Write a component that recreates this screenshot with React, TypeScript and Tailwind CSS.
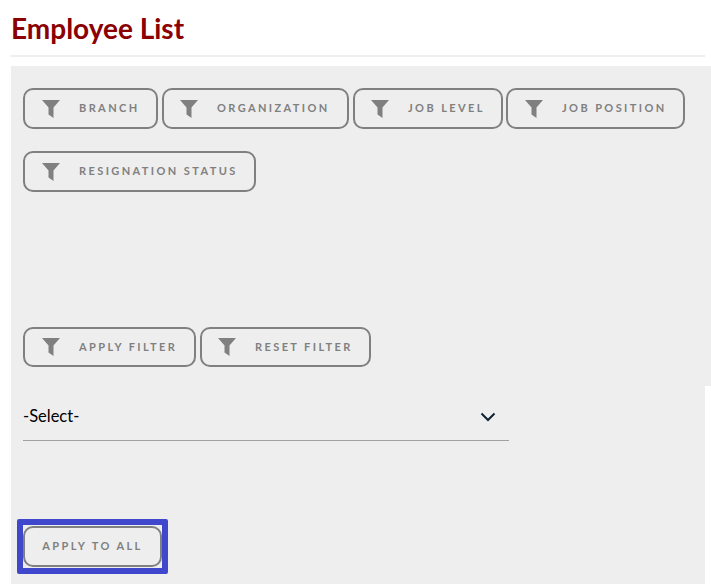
const F = '[font-family:Lato,sans-serif]';

function Funnel() {
  return (
    <svg width="18" height="18" viewBox="0 0 18 18" className="shrink-0 block">
      <path d="M0 0H18L11.5 7.5V18L6.5 14.5V7.5Z" fill="#808080" />
    </svg>
  );
}

function FilterBtn({ label, w, h = 'h-[41px]', pl = 'pl-[17px]' }: { label: string; w: string; h?: string; pl?: string }) {
  return (
    <button className={`${w} ${h} ${pl} flex items-center border-2 border-[#808080] rounded-[10px] bg-transparent`}>
      <Funnel />
      <span className={`ml-[19px] text-[11px] font-bold tracking-[2.4px] text-[#808080] whitespace-nowrap ${F}`}>{label}</span>
    </button>
  );
}

export default function App() {
  return (
    <div className={`w-[711px] h-[584px] overflow-hidden bg-white ${F}`}>
      <div className="pl-[11px]">
        <h1 className="h-[55px] pt-[10px] text-[28px] leading-[36px] font-bold text-[#8b0000]">Employee List</h1>
        <div className="h-[2px] bg-[#eeeeee] mr-[6px]" />
      </div>
      <div className="ml-[11px] mt-[9px]">
        <div className="h-[320px] bg-[#eeeeee] px-3 pt-[22px] flex flex-col justify-between pb-[19px]">
          <div className="flex flex-wrap gap-x-1 gap-y-[22px]">
            <FilterBtn label="BRANCH" w="w-[135px]" />
            <FilterBtn label="ORGANIZATION" w="w-[187px]" pl="pl-[16px]" />
            <FilterBtn label="JOB LEVEL" w="w-[150px]" pl="pl-[16px]" />
            <FilterBtn label="JOB POSITION" w="w-[179px] -ml-[1px]" />
            <FilterBtn label="RESIGNATION STATUS" w="w-[233px]" />
          </div>
          <div className="flex gap-1">
            <FilterBtn label="APPLY FILTER" w="w-[173px]" h="h-[40px]" />
            <FilterBtn label="RESET FILTER" w="w-[171px]" h="h-[40px]" pl="pl-[16px]" />
          </div>
        </div>
        <div className="w-[694px] h-[198px] bg-[#eeeeee] px-3">
          <div className="w-[486px] h-[55px] border-b border-[#a0a0a0] flex items-center justify-between pr-[13px] pt-[7px]">
            <span className="text-[16.5px] text-black">-Select-</span>
            <svg width="16" height="10" viewBox="0 0 16 10" fill="none" stroke="#0f2233" strokeWidth="2" className="block">
              <path d="M1.5 1.5L8 8L14.5 1.5" />
            </svg>
          </div>
          <div className="mt-[78px] -ml-[6px] w-[151px] h-[55px] border-[6px] border-[#3f48cc] rounded-[2px] flex items-start justify-center">
            <button className="w-[139px] h-[41px] mt-[1px] border-2 border-[#808080] rounded-[10px] text-[11px] font-bold tracking-[2.4px] text-[#808080] whitespace-nowrap">APPLY TO ALL</button>
          </div>
        </div>
      </div>
    </div>
  );
}
